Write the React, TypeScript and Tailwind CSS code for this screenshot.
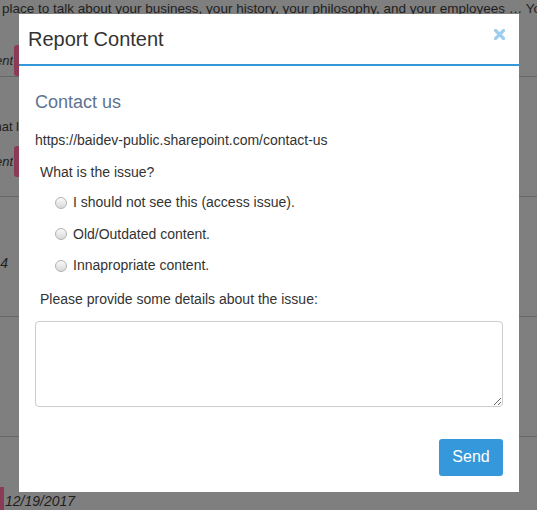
import React from 'react';

const Radio: React.FC<{ label: string }> = ({ label }) => (
  <label className="flex items-center h-[31.5px] pl-[20px]">
    <span className="w-[12px] h-[12px] rounded-full border border-[#b3b3b3] bg-gradient-to-b from-[#fafafa] to-[#d9d9d9]" />
    <span className="ml-[6px] text-[14px] text-[#333]">{label}</span>
  </label>
);

const Tag: React.FC<{ text: string }> = ({ text }) => (
  <div className="flex items-center h-[31px]">
    <div className="w-[13px] overflow-hidden flex justify-end">
      <span className="italic text-[13px] text-[#1e1e1e] whitespace-nowrap">{text}</span>
    </div>
    <div className="ml-[1px] w-[6px] h-[31px] rounded-l-[3px] bg-[#8b3b57]" />
  </div>
);

export default function App() {
  return (
    <div className="relative w-[537px] h-[510px] overflow-hidden bg-[#7f7f7f] font-['Liberation_Sans',Arial,sans-serif]">
      {/* page behind the backdrop */}
      <div className="flex flex-col">
        <p className="text-[13.5px] leading-[17px] text-[#1e1e1e] whitespace-nowrap pl-[2px]">
          place to talk about your business, your history, your philosophy, and your employees … You might
        </p>
        <div className="h-[60px] flex flex-col justify-end border-b border-[#666]">
          <Tag text="Comment" />
        </div>
        <div className="h-[120px] flex flex-col border-b border-[#666]">
          <div className="mt-[41px] w-[19px] overflow-hidden flex justify-end">
            <span className="text-[13px] leading-[17px] text-[#1e1e1e] whitespace-nowrap">What l</span>
          </div>
          <div className="mt-[11px]">
            <Tag text="Comment" />
          </div>
        </div>
        <div className="h-[120px] flex flex-col border-b border-[#666]">
          <div className="mt-[58px] w-[8px] overflow-hidden flex justify-end">
            <span className="italic text-[14px] leading-[17px] text-[#1e1e1e] whitespace-nowrap">2014</span>
          </div>
        </div>
        <div className="h-[120px] border-b border-[#666]" />
        <div className="flex items-start pt-[50px]">
          <div className="w-[4px] h-[24px] bg-[#8b3b57]" />
          <span className="ml-[1px] mt-[6px] italic text-[14px] leading-[17px] text-[#1e1e1e]">12/19/2017</span>
        </div>
      </div>

      {/* modal */}
      <div className="absolute left-[19px] top-[14px] w-[500px] h-[478px] bg-white flex flex-col">
        <div className="relative h-[52px] border-b-2 border-[#3498db] pl-[9px] pt-[13px]">
          <h2 className="text-[20px] leading-[24px] text-[#333]">Report Content</h2>
          <button className="absolute right-[14px] top-[15px] w-[11px] h-[11px]">
            <svg viewBox="0 0 11 11" className="w-[11px] h-[11px]">
              <path d="M1.5 1.5 L9.5 9.5 M9.5 1.5 L1.5 9.5" stroke="#9fcdee" strokeWidth="3.2" strokeLinecap="square" />
            </svg>
          </button>
        </div>
        <div className="flex flex-col px-[16px]">
          <h3 className="mt-[25px] text-[18px] leading-[22px] text-[#5e7391]">Contact us</h3>
          <p className="mt-[19px] text-[14px] leading-[16px] text-[#333]">https://baidev-public.sharepoint.com/contact-us</p>
          <p className="mt-[16px] pl-[5px] text-[14px] leading-[16px] text-[#333]">What is the issue?</p>
          <div className="mt-[7px] flex flex-col">
            <Radio label="I should not see this (access issue)." />
            <Radio label="Old/Outdated content." />
            <Radio label="Innapropriate content." />
          </div>
          <p className="mt-[9px] pl-[5px] text-[14px] leading-[16px] text-[#333]">Please provide some details about the issue:</p>
          <textarea className="mt-[14px] w-[468px] h-[86px] border border-[#ccc] rounded-[4px] outline-none" />
          <div className="mt-[32px] flex justify-end">
            <button className="w-[64px] h-[37px] rounded-[3px] bg-[#3498db] text-white text-[16px]">Send</button>
          </div>
        </div>
      </div>
    </div>
  );
}
